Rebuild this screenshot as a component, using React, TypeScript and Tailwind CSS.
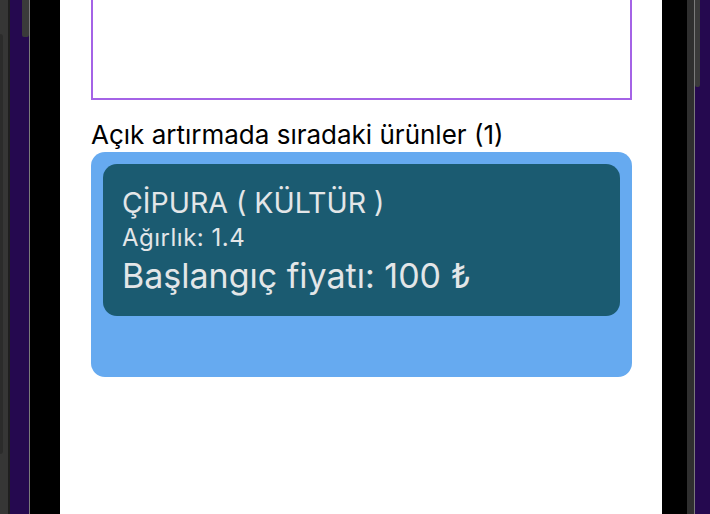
import React from 'react';

type Lot = {
  name: string;
  weight: string;
  price: string;
};

const queue: Lot[] = [{ name: 'ÇİPURA ( KÜLTÜR )', weight: '1.4', price: '100' }];

function LeftRail() {
  return (
    <div className="flex h-full w-[30px] shrink-0">
      <div className="flex h-full w-[8px] flex-col bg-[#363636] pb-[60px] pt-[34px]">
        <div className="h-full w-[3px] rounded-r-[3px] bg-[#2b2b2b]" />
      </div>
      <div className="h-full w-[2px] bg-[#1f1f1f]" />
      <div className="flex h-full w-[19px] justify-end bg-[#25094f]">
        <div className="h-[37px] w-[7px] rounded-b-[2px] bg-[#3a3a3a]" />
      </div>
      <div className="h-full w-[1px] bg-[#7a7a7a]" />
    </div>
  );
}

function RightRail() {
  return (
    <div className="flex h-full flex-1">
      <div className="h-full w-[7px] bg-[#2f2f2f]" />
      <div className="h-full w-[1px] bg-[#7a7a7a]" />
      <div className="flex h-full flex-1 bg-[#25094f]">
        <div className="h-[87px] w-[5px] rounded-b-[2px] bg-[#3a3a3a]" />
      </div>
    </div>
  );
}

function LotCard({ lot }: { lot: Lot }) {
  return (
    <div className="flex h-[152px] flex-col rounded-[14px] bg-[#1b5b71] pl-[19px] pt-[23px] text-[#e3e6e8]">
      <p className="text-[28.5px] leading-[32px]">{lot.name}</p>
      <p className="mt-[4px] text-[24px] leading-[30px] tracking-[0.5px]">Ağırlık: {lot.weight}</p>
      <p className="mt-[3px] text-[34px] leading-[40px]">Başlangıç fiyatı: {lot.price} ₺</p>
    </div>
  );
}

export default function App() {
  return (
    <div
      className="flex h-[514px] w-[710px] overflow-hidden bg-black"
      style={{ fontFamily: 'Inter, "Noto Sans", sans-serif' }}
    >
      <LeftRail />
      <div className="w-[30px] shrink-0 bg-black" />

      {/* phone screen */}
      <div className="flex h-full w-[602px] shrink-0 flex-col bg-white pl-[31px] pr-[30px]">
        <div className="h-[100px] w-full border-x-2 border-b-2 border-solid border-[color:#a463e6]" />

        <p className="mt-[20px] text-[26px] leading-[30px] text-black">
          Açık artırmada sıradaki ürünler ({queue.length})
        </p>

        <div className="mt-[2px] h-[225px] rounded-[14px] bg-[#66aaf0] p-[12px]">
          {queue.map((lot) => (
            <LotCard key={lot.name} lot={lot} />
          ))}
        </div>
      </div>

      <div className="w-[25px] shrink-0 bg-black" />
      <RightRail />
    </div>
  );
}
